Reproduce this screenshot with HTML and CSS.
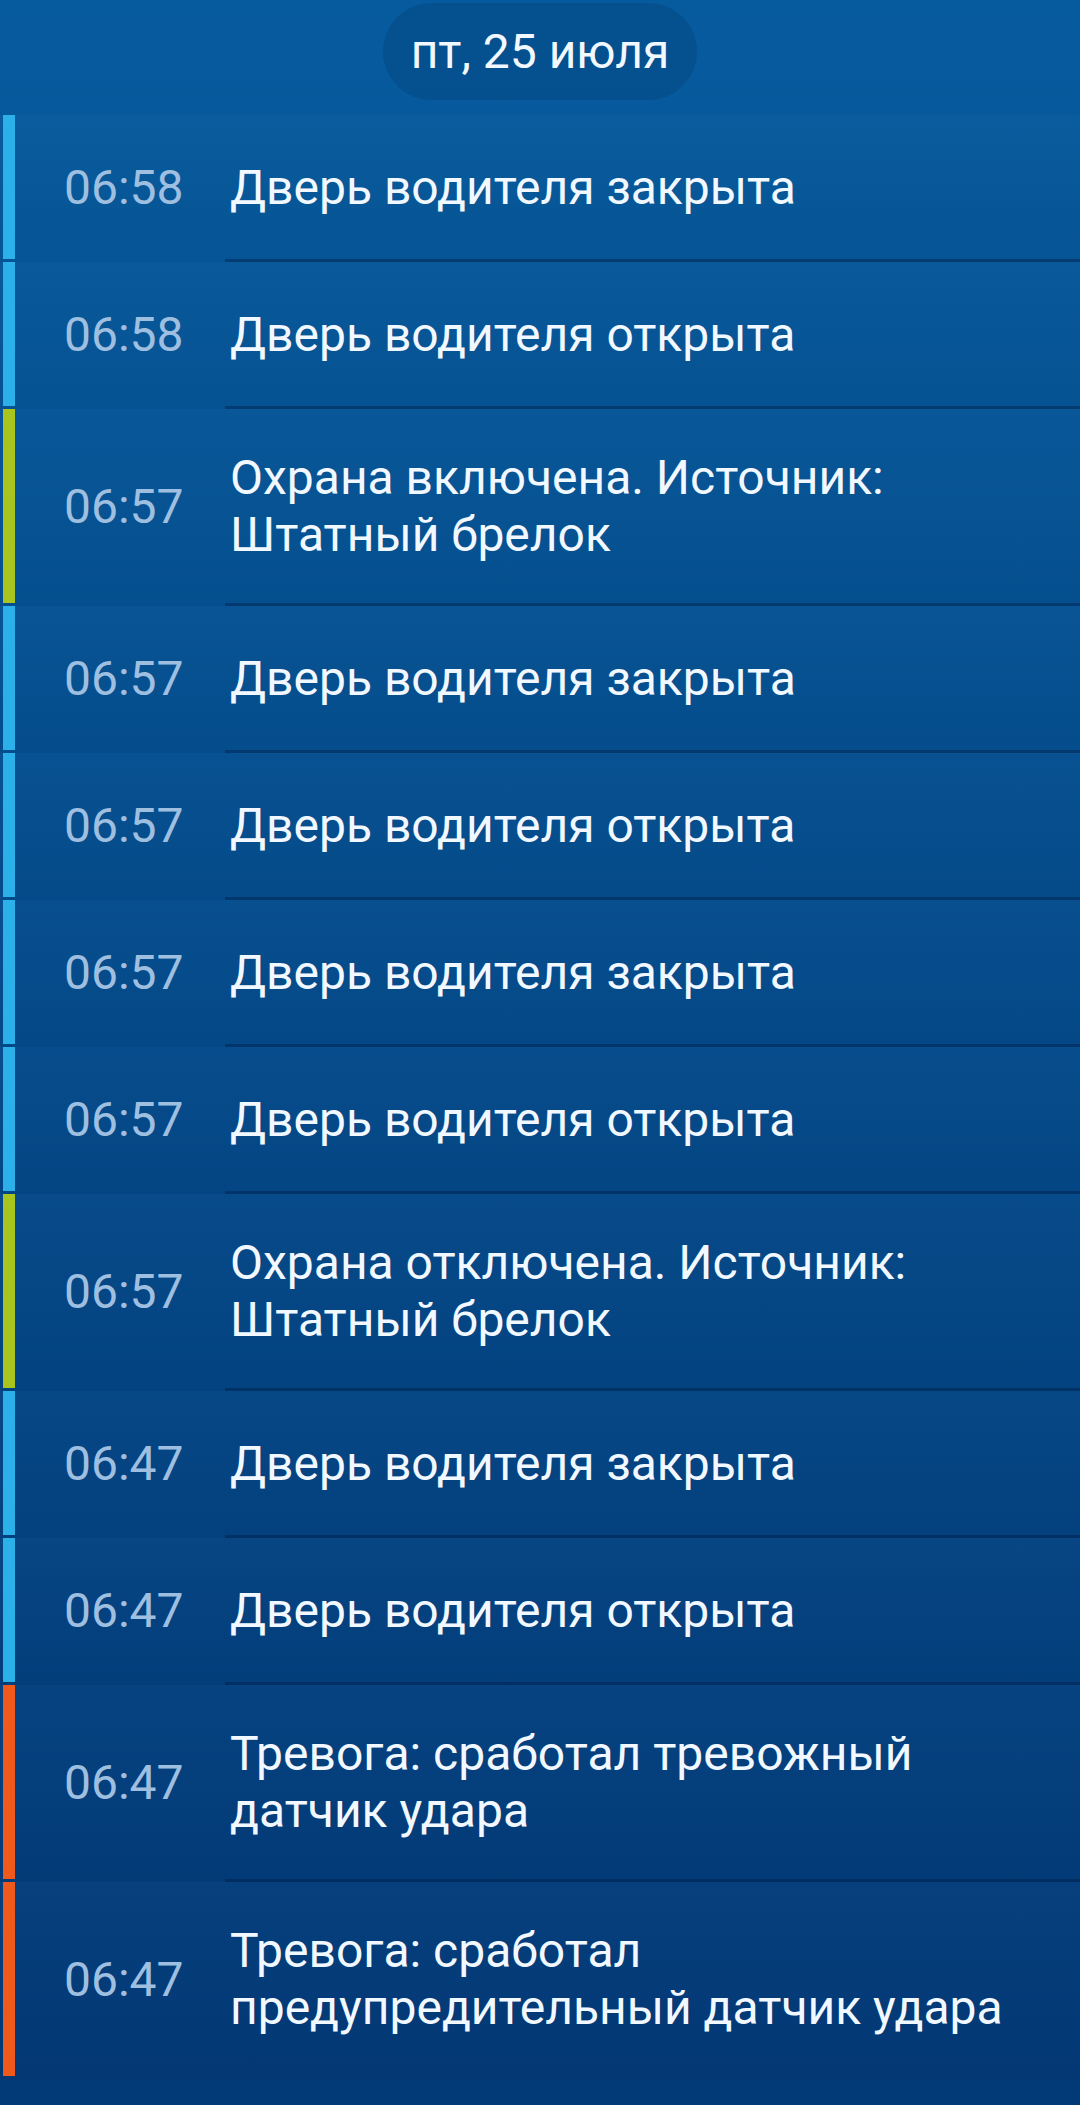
FILE: index.html
```html
<!DOCTYPE html>
<html lang="ru">
    <head>
        <meta charset="UTF-8">
        <meta name="viewport" content="width=device-width, initial-scale=1.0">
        <title>События</title>
        <link rel="stylesheet" href="styles.css">
    </head>
    <body>

        <div id="date-header">
            <div class="date-pill">пт, 25 июля</div>
        </div>

        <div id="event-list">
            <div class="event-row door">
                <div class="stripe"></div>
                <div class="event-time">06:58</div>
                <div class="event-title">Дверь водителя закрыта</div>
            </div>
            <div class="event-row door">
                <div class="stripe"></div>
                <div class="event-time">06:58</div>
                <div class="event-title">Дверь водителя открыта</div>
            </div>
            <div class="event-row guard">
                <div class="stripe"></div>
                <div class="event-time">06:57</div>
                <div class="event-title">Охрана включена. Источник: Штатный брелок</div>
            </div>
            <div class="event-row door">
                <div class="stripe"></div>
                <div class="event-time">06:57</div>
                <div class="event-title">Дверь водителя закрыта</div>
            </div>
            <div class="event-row door">
                <div class="stripe"></div>
                <div class="event-time">06:57</div>
                <div class="event-title">Дверь водителя открыта</div>
            </div>
            <div class="event-row door">
                <div class="stripe"></div>
                <div class="event-time">06:57</div>
                <div class="event-title">Дверь водителя закрыта</div>
            </div>
            <div class="event-row door">
                <div class="stripe"></div>
                <div class="event-time">06:57</div>
                <div class="event-title">Дверь водителя открыта</div>
            </div>
            <div class="event-row guard">
                <div class="stripe"></div>
                <div class="event-time">06:57</div>
                <div class="event-title">Охрана отключена. Источник: Штатный брелок</div>
            </div>
            <div class="event-row door">
                <div class="stripe"></div>
                <div class="event-time">06:47</div>
                <div class="event-title">Дверь водителя закрыта</div>
            </div>
            <div class="event-row door">
                <div class="stripe"></div>
                <div class="event-time">06:47</div>
                <div class="event-title">Дверь водителя открыта</div>
            </div>
            <div class="event-row alarm">
                <div class="stripe"></div>
                <div class="event-time">06:47</div>
                <div class="event-title">Тревога: сработал тревожный датчик удара</div>
            </div>
            <div class="event-row alarm">
                <div class="stripe"></div>
                <div class="event-time">06:47</div>
                <div class="event-title">Тревога: сработал предупредительный датчик удара</div>
            </div>
        </div>

    </body>
</html>
```

FILE: styles.css
```css
body {
    margin: 0;
    min-height: 100vh;
    background: linear-gradient(#065b9e, #023977);
    font-family: Roboto, "Noto Sans", sans-serif;
    color: #f2f8ff;
}

#date-header {
    display: flex;
    justify-content: center;
    padding-top: 3px;
    margin-bottom: 15px;
}

.date-pill {
    height: 97px;
    padding: 0 28px;
    display: flex;
    align-items: center;
    border-radius: 49px;
    background-color: rgba(0, 30, 70, 0.16);
    font-size: 48px;
}

.event-row {
    display: flex;
    background: linear-gradient(rgba(255, 255, 255, 0.015), rgba(0, 0, 0, 0.03));
}

.stripe {
    width: 12px;
    margin-left: 3px;
    margin-bottom: 3px;
    flex-shrink: 0;
}

.door .stripe {
    background-color: #2bb0ea;
}

.guard .stripe {
    background-color: #a7c51e;
}

.alarm .stripe {
    background-color: #ef5a1c;
}

.event-time {
    width: 161px;
    padding-left: 49px;
    flex-shrink: 0;
    display: flex;
    align-items: center;
    font-size: 48px;
    color: #9fbfe0;
    padding-bottom: 3px;
}

.event-title {
    flex: 1;
    min-height: 147px;
    box-sizing: border-box;
    padding: 40px 48px 40px 5px;
    display: flex;
    align-items: center;
    font-size: 48px;
    line-height: 57px;
    border-bottom: 3px solid rgba(0, 20, 55, 0.35);
}

.event-row:last-child .event-title {
    border-bottom-color: transparent;
}
```
